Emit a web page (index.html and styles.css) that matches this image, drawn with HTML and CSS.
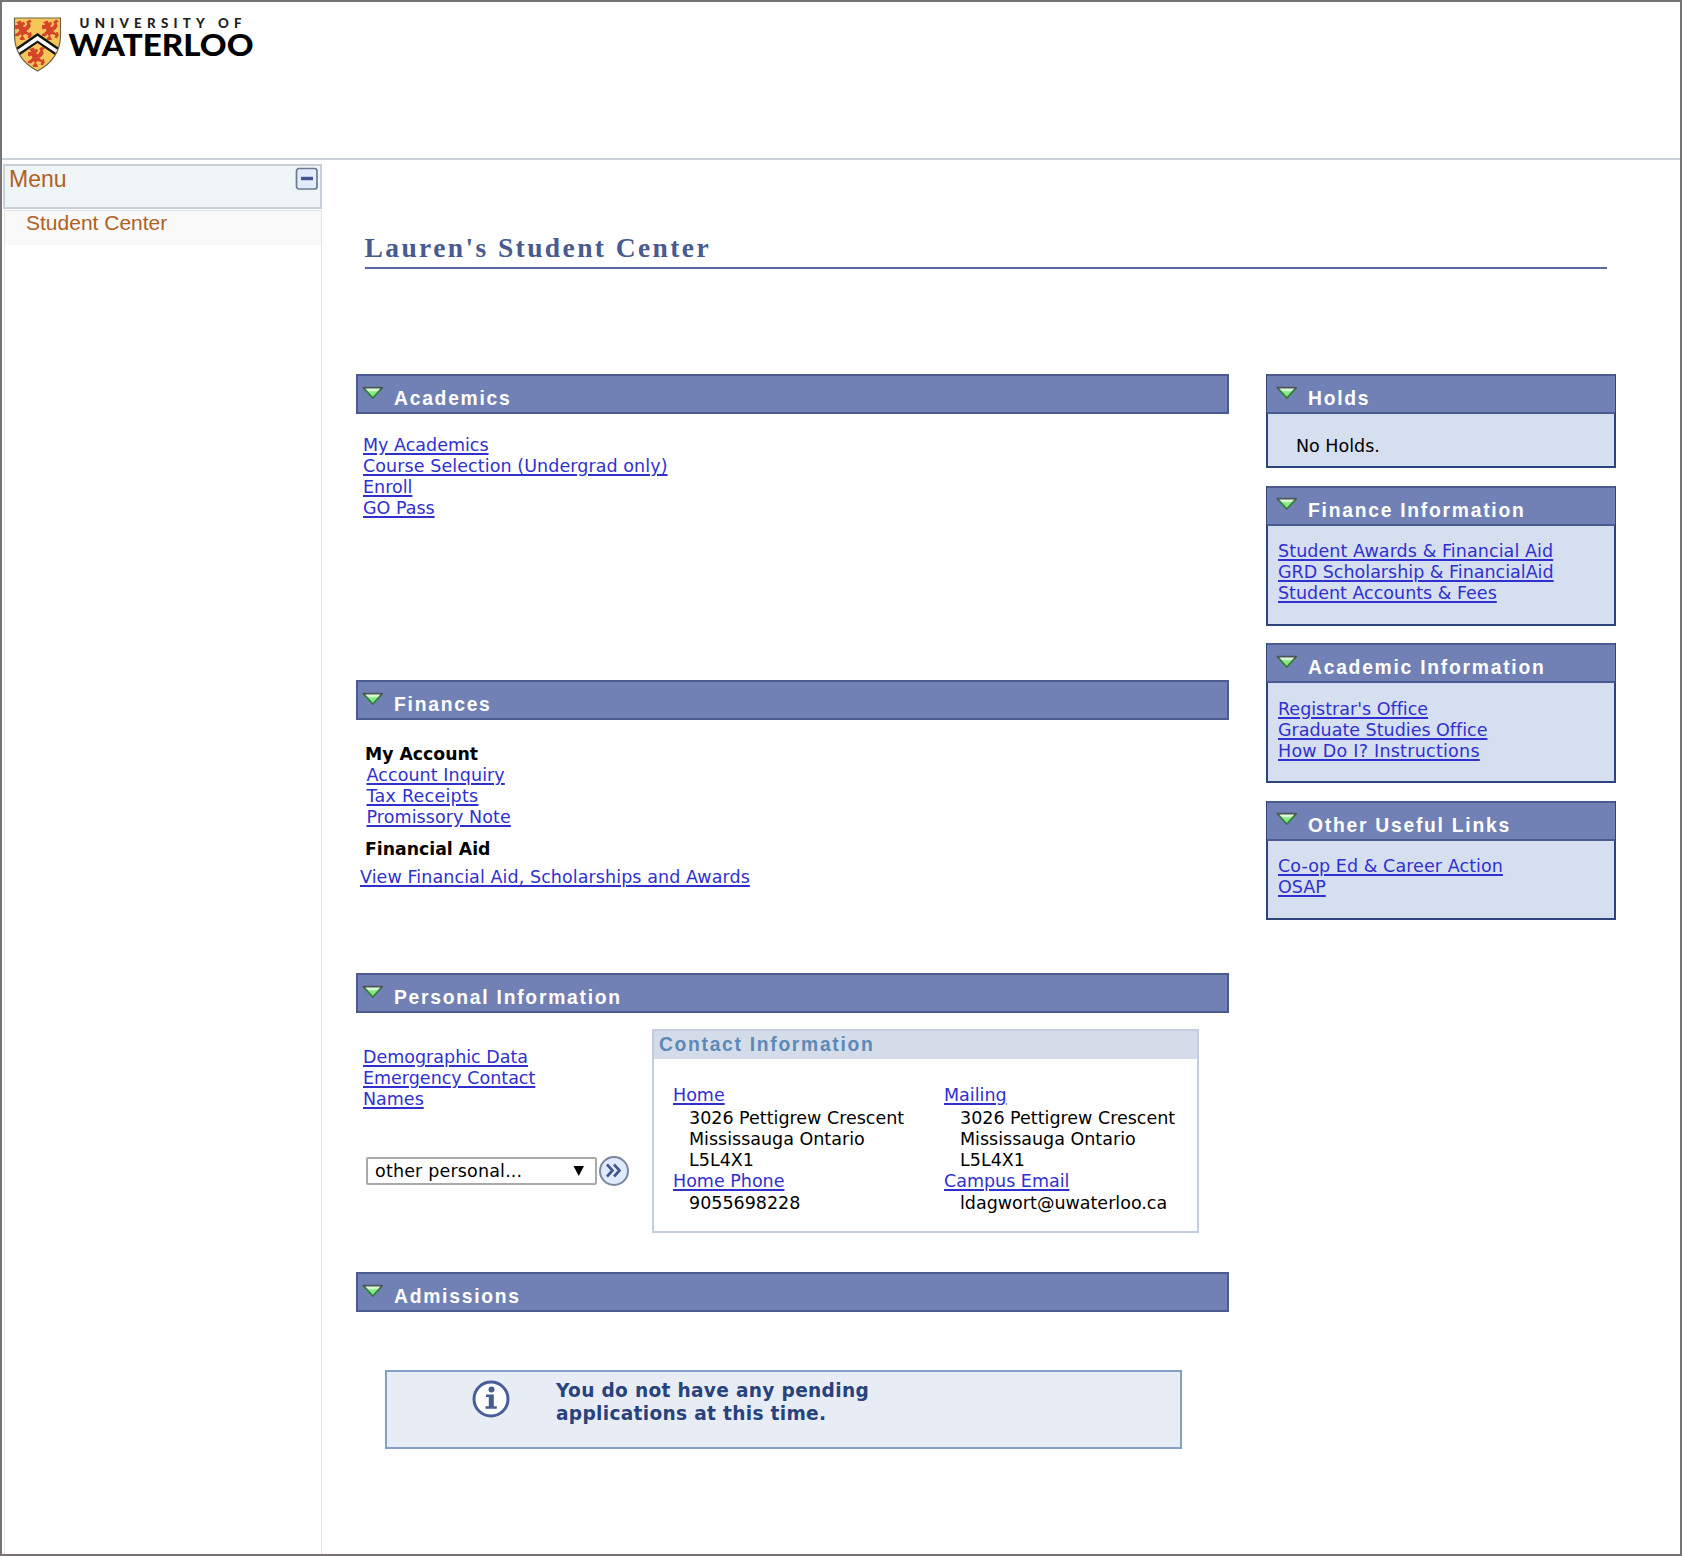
FILE: index.html
```html
<!DOCTYPE html>
<html lang="en">
<head>
<meta charset="utf-8">
<title>Student Center</title>
<link rel="stylesheet" href="styles.css">
</head>
<body>
<svg class="sprite" aria-hidden="true">
  <defs>
    <linearGradient id="green" x1="0" y1="0" x2="0" y2="1">
      <stop offset="0" stop-color="#f0fbec"/><stop offset=".3" stop-color="#d4f6cc"/><stop offset=".38" stop-color="#8aea88"/><stop offset="1" stop-color="#7ce67c"/>
    </linearGradient>
    <linearGradient id="edge" x1="0" y1="0" x2="0" y2="1">
      <stop offset="0" stop-color="#4c5458"/><stop offset=".3" stop-color="#347c3e"/><stop offset=".8" stop-color="#2e8636"/><stop offset="1" stop-color="#4f6560"/>
    </linearGradient>
    <symbol id="arrow" viewBox="0 0 22 14"><path d="M1.300 1.700H20.300L10.800 12.200Z" fill="url(#green)" stroke="url(#edge)" stroke-width="1.800" stroke-linejoin="round"/></symbol>
    <symbol id="lion" viewBox="0 0 16 18">
      <path d="M2 2l3-1 1 2 2-1 1 2-2 2 2 1 2-3-1-2 3-2 2 2-2 1 1 3-2 3-2 1 2 2 2-1 1 3-2 3-2-1 1-2-3-1-2 1 1 2 1 2-4 1-1-2 2-2-1-2-2 2-3 0 0-2 2-1 2-2-1-2-2 1-2-2 1-2 2 0 1-1-2-1z" fill="#d5452a"/>
    </symbol>
  </defs>
</svg>
<div class="page">
  <header class="banner">
    <svg class="logo" width="260" height="76" viewBox="0 0 260 76" role="img" aria-label="University of Waterloo">
      <defs><clipPath id="shield"><path d="M14.500 18H60.500V36C60 53 51 64 37.500 71C24 64 15 53 14.500 36Z"/></clipPath></defs>
      <g clip-path="url(#shield)">
        <rect x="14" y="17" width="48" height="56" fill="#f6c65a"/>
        <use href="#lion" x="15" y="19" width="18" height="21"/>
        <use href="#lion" x="42" y="19" width="18" height="21"/>
        <use href="#lion" x="28" y="46" width="18" height="21"/>
        <path d="M37.500 33L62 50V60L37.500 43L13 60V50Z" fill="#171717"/>
        <path d="M37.500 36L62 53V57L37.500 40.500L13 57V53Z" fill="#fff"/>
      </g>
      <path d="M14.500 18H60.500V36C60 53 51 64 37.500 71C24 64 15 53 14.500 36Z" fill="none" stroke="#6c6448" stroke-width="1.200"/>
      <text class="logo-small" x="79.500" y="27.800" textLength="162" lengthAdjust="spacing">UNIVERSITY OF</text>
      <text class="logo-large" x="68.500" y="56.200" textLength="185" lengthAdjust="spacingAndGlyphs">WATERLOO</text>
    </svg>
  </header>
  <div class="columns">
    <nav class="sidebar">
      <div class="menu-head"><span>Menu</span>
        <svg width="24" height="24" viewBox="0 0 24 24"><rect x="1.500" y="1.500" width="20.500" height="20.500" rx="2.500" fill="#e1ebfc" stroke="#6d7994" stroke-width="1.700"/><path d="M6 11.500H18" stroke="#44548c" stroke-width="3.400"/></svg>
      </div>
      <div class="menu-body"><a class="menu-item">Student Center</a></div>
    </nav>
    <main class="content">
      <h1>Lauren's Student Center</h1>
      <div class="boards">
        <div class="primary">
          <section class="academics">
            <h2><svg><use href="#arrow"/></svg>Academics</h2>
            <ul class="links">
              <li><a>My Academics</a></li>
              <li><a class="wide">Course Selection (Undergrad only)</a></li>
              <li><a>Enroll</a></li>
              <li><a>GO Pass</a></li>
            </ul>
          </section>
          <section class="finances">
            <h2><svg><use href="#arrow"/></svg>Finances</h2>
            <h3>My Account</h3>
            <ul class="links">
              <li><a class="wide">Account Inquiry</a></li>
              <li><a class="wider">Tax Receipts</a></li>
              <li><a class="wide">Promissory Note</a></li>
            </ul>
            <h3 class="aid">Financial Aid</h3>
            <p class="view"><a class="wide">View Financial Aid, Scholarships and Awards</a></p>
          </section>
          <section class="personal">
            <h2><svg><use href="#arrow"/></svg>Personal Information</h2>
            <div class="personal-row">
              <div class="personal-side">
                <ul class="links">
                  <li><a>Demographic Data</a></li>
                  <li><a>Emergency Contact</a></li>
                  <li><a>Names</a></li>
                </ul>
                <div class="picker">
                  <div class="select"><span>other personal...</span><svg width="12" height="12" viewBox="0 0 12 12"><path d="M.5 1H11L5.750 11Z" fill="#000"/></svg></div>
                  <svg class="go" width="32" height="32" viewBox="0 0 32 32"><circle cx="16" cy="16" r="14" fill="#dfebfc" stroke="#7a859e" stroke-width="2"/><path d="M9 9.500L14.500 15.500L9 21.500M16 9.500L21.500 15.500L16 21.500" fill="none" stroke="#43548f" stroke-width="2.600"/></svg>
                </div>
              </div>
              <div class="contact">
                <h4>Contact Information</h4>
                <div class="contact-grid">
                  <div>
                    <a class="place">Home</a>
                    <p>3026 Pettigrew Crescent<br>Mississauga Ontario<br>L5L4X1</p>
                    <a>Home Phone</a>
                    <p>9055698228</p>
                  </div>
                  <div>
                    <a class="place">Mailing</a>
                    <p>3026 Pettigrew Crescent<br>Mississauga Ontario<br>L5L4X1</p>
                    <a>Campus Email</a>
                    <p>ldagwort@uwaterloo.ca</p>
                  </div>
                </div>
              </div>
            </div>
          </section>
          <section class="admissions">
            <h2><svg><use href="#arrow"/></svg>Admissions</h2>
            <div class="notice">
              <svg width="38" height="38" viewBox="0 0 38 38"><circle cx="19" cy="19" r="17" fill="#fdfeff" stroke="#4a5d9b" stroke-width="3"/><circle cx="19.500" cy="9.500" r="3" fill="#4a5c8e"/><path d="M14 14.500H21.800V26.200H24.800V28.700H13.500V26.200H16.800V17H14Z" fill="#4a5c8e"/></svg>
              <p>You do not have any pending<br>applications at this time.</p>
            </div>
          </section>
        </div>
        <aside class="secondary">
          <section class="box holds">
            <h2><svg><use href="#arrow"/></svg>Holds</h2>
            <p>No Holds.</p>
          </section>
          <section class="box">
            <h2><svg><use href="#arrow"/></svg>Finance Information</h2>
            <ul class="links">
              <li><a class="wide">Student Awards &amp; Financial Aid</a></li>
              <li><a>GRD Scholarship &amp; FinancialAid</a></li>
              <li><a>Student Accounts &amp; Fees</a></li>
            </ul>
          </section>
          <section class="box">
            <h2><svg><use href="#arrow"/></svg>Academic Information</h2>
            <ul class="links">
              <li><a>Registrar's Office</a></li>
              <li><a>Graduate Studies Office</a></li>
              <li><a class="wider">How Do I? Instructions</a></li>
            </ul>
          </section>
          <section class="box useful">
            <h2><svg><use href="#arrow"/></svg>Other Useful Links</h2>
            <ul class="links">
              <li><a class="wide">Co-op Ed &amp; Career Action</a></li>
              <li><a>OSAP</a></li>
            </ul>
          </section>
        </aside>
      </div>
    </main>
  </div>
</div>
</body>
</html>
```
FILE: styles.css
```css
* { box-sizing: border-box; }
body {
  margin: 0;
  background: #fff;
  color: #000;
  font: 17.5px/21px Verdana, "DejaVu Sans", sans-serif;
  font-variant-ligatures: none;
}
h1, h2, h3, h4, p, ul { margin: 0; padding: 0; }
ul { list-style: none; }
a { color: #3030cf; text-decoration: underline; text-decoration-thickness: 1.5px; text-underline-offset: 2px; }
.wide { letter-spacing: .08px; }
.wider { letter-spacing: .25px; }
.sprite { display: block; width: 0; height: 0; }

.page {
  display: flex;
  flex-direction: column;
  height: 1556px;
  border: 2px solid #757373;
  overflow: hidden;
}
.banner { height: 158px; border-bottom: 2px solid #ccd2da; }
.logo { display: block; margin: -2px 0 0 -2px; }
.logo-small { font: 900 13.3px Lato, sans-serif; fill: #222; }
.logo-large { font: 900 29.5px Lato, sans-serif; fill: #000; }

.columns { display: flex; flex: 1; }
.sidebar {
  display: flex;
  flex-direction: column;
  width: 320px;
  padding: 4px 0 0 1px;
  font-family: Arial, "Liberation Sans", sans-serif;
}
.menu-head {
  display: flex;
  justify-content: space-between;
  height: 45px;
  padding: 1px 1px 0 4px;
  border: 2px solid #c9cfd9;
  background: #eff4f6;
  color: #b0601f;
  font-size: 23px;
  line-height: 25px;
}
.menu-body { flex: 1; margin: 1px 0 0 1px; border: 1.5px solid #e2e4e7; border-bottom: 0; }
.menu-item {
  display: block;
  height: 34px;
  padding-left: 21px;
  background: #f9f9f9;
  color: #b0601f;
  font-size: 21px;
  line-height: 24px;
  text-decoration: none;
}

.content { flex: 1; padding: 72px 64px 0 34px; }
h1 {
  width: 1242px;
  height: 37px;
  margin-left: 8.5px;
  border-bottom: 2px solid #5a6a9c;
  color: #485a8f;
  font: bold 27.5px/31px Georgia, "Liberation Serif", serif;
  letter-spacing: 2.4px;
}
.boards { display: flex; justify-content: space-between; padding-top: 105px; }
.primary { width: 873px; }
.secondary { display: flex; flex-direction: column; gap: 17.5px; width: 350px; }

h2 {
  display: flex;
  height: 40px;
  padding: 11px 0 0 4px;
  border: 2px solid #4b5b92;
  background: #7281b5;
  color: #fff;
  font: bold 19.3px/24px Arial, "Liberation Sans", sans-serif;
  letter-spacing: 1.75px;
}
h2 svg { width: 22px; height: 14px; margin: -1.5px 10px 0 0; }
h3 { padding-left: 9px; font-size: 17.3px; line-height: 21px; }

.academics { height: 306px; }
.academics .links, .personal .links { padding: 21px 0 0 7px; }
.finances { height: 293px; }
.finances h3 { padding-top: 24px; }
.finances .links { padding-left: 10.5px; }
.finances h3.aid { padding-top: 11px; }
.view { padding: 7px 0 0 4px; }
.personal { height: 299px; }
.personal-row { display: flex; }
.personal-side { width: 296px; }
.personal .links { padding-top: 34px; }
.picker { display: flex; align-items: center; padding: 45px 0 0 10px; }
.select {
  display: flex;
  align-items: center;
  justify-content: space-between;
  width: 231px;
  height: 28px;
  padding: 0 10px 0 7px;
  border: 2px solid #a9a9a9;
  border-radius: 2px;
  letter-spacing: .17px;
}
.go { margin-left: .5px; }
.contact { width: 547px; height: 204px; margin-top: 16px; border: 2px solid #c4cde0; }
h4 {
  height: 28px;
  padding-left: 5px;
  background: #d5dce9;
  color: #5b8ab8;
  font: bold 19.3px/28px Arial, "Liberation Sans", sans-serif;
  letter-spacing: 1.7px;
}
.contact-grid { display: grid; grid-template-columns: 271px 1fr; padding: 26px 0 0 19px; }
.contact-grid a { display: block; width: fit-content; height: 22px; line-height: 21px; }
.contact-grid a.place { height: 23px; }
.contact-grid p { padding-left: 16px; }

.notice {
  display: flex;
  width: 797px;
  height: 79px;
  margin: 58px 0 0 29px;
  padding: 8px 0 0 85px;
  border: 2px solid #84a0c8;
  background: #e8edf5;
}
.notice p { margin-top: -1px; padding-left: 46px; color: #28427c; font-weight: bold; font-size: 18.6px; line-height: 23px; letter-spacing: .3px; }

.box { height: 140px; border: 2px solid #2d447c; border-top: 0; background: #d6dff0; }
.box h2 { margin: 0 -1px; padding-left: 9px; border-width: 2px 0; }
.box .links { padding: 15.5px 0 0 10px; }
.holds { height: 94px; }
.holds p { padding: 22px 0 0 28px; }
.useful { height: 119px; }
```
